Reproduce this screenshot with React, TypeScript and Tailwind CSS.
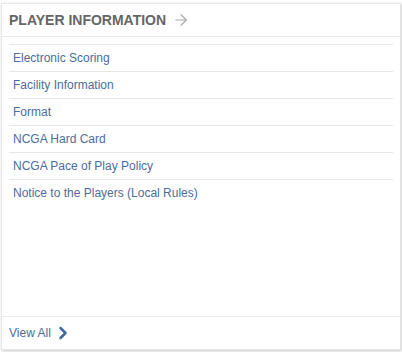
import { ArrowRight, ChevronRight } from 'lucide-react';

const links = [
  'Electronic Scoring',
  'Facility Information',
  'Format',
  'NCGA Hard Card',
  'NCGA Pace of Play Policy',
  'Notice to the Players (Local Rules)',
];

const App = () => {
  return (
    <div className="w-[402px] h-[352px] bg-white pt-[3px] pl-[1px] font-['Liberation_Sans',Arial,sans-serif]">
      <div className="w-[400px] h-[347px] flex flex-col bg-white border border-[#e6e6e6] shadow-[1px_1px_3px_rgba(0,0,0,0.22)]">
        <div className="h-[33px] flex items-center gap-[6px] pl-[7px] border-b border-[#e8e8e8]">
          <h2 className="text-[14px] font-bold text-[#666666]">PLAYER INFORMATION</h2>
          <ArrowRight size={18} strokeWidth={1.5} className="text-[#a9a9a9]" />
        </div>

        <ul className="flex-1 px-[7px] pt-[7px]">
          {links.map((link) => (
            <li key={link} className="h-[27px] flex items-center pl-[4px] border-t border-[#e8e8e8]">
              <a href="#" className="text-[12px] text-[#4a6d9d]">
                {link}
              </a>
            </li>
          ))}
        </ul>

        <div className="h-[33px] flex items-center gap-[2px] pl-[7px] border-t border-[#ececec]">
          <span className="text-[12px] text-[#4a6d9d]">View All</span>
          <ChevronRight size={20} strokeWidth={3} className="text-[#3f6aa0]" />
        </div>
      </div>
    </div>
  );
};

export default App;
